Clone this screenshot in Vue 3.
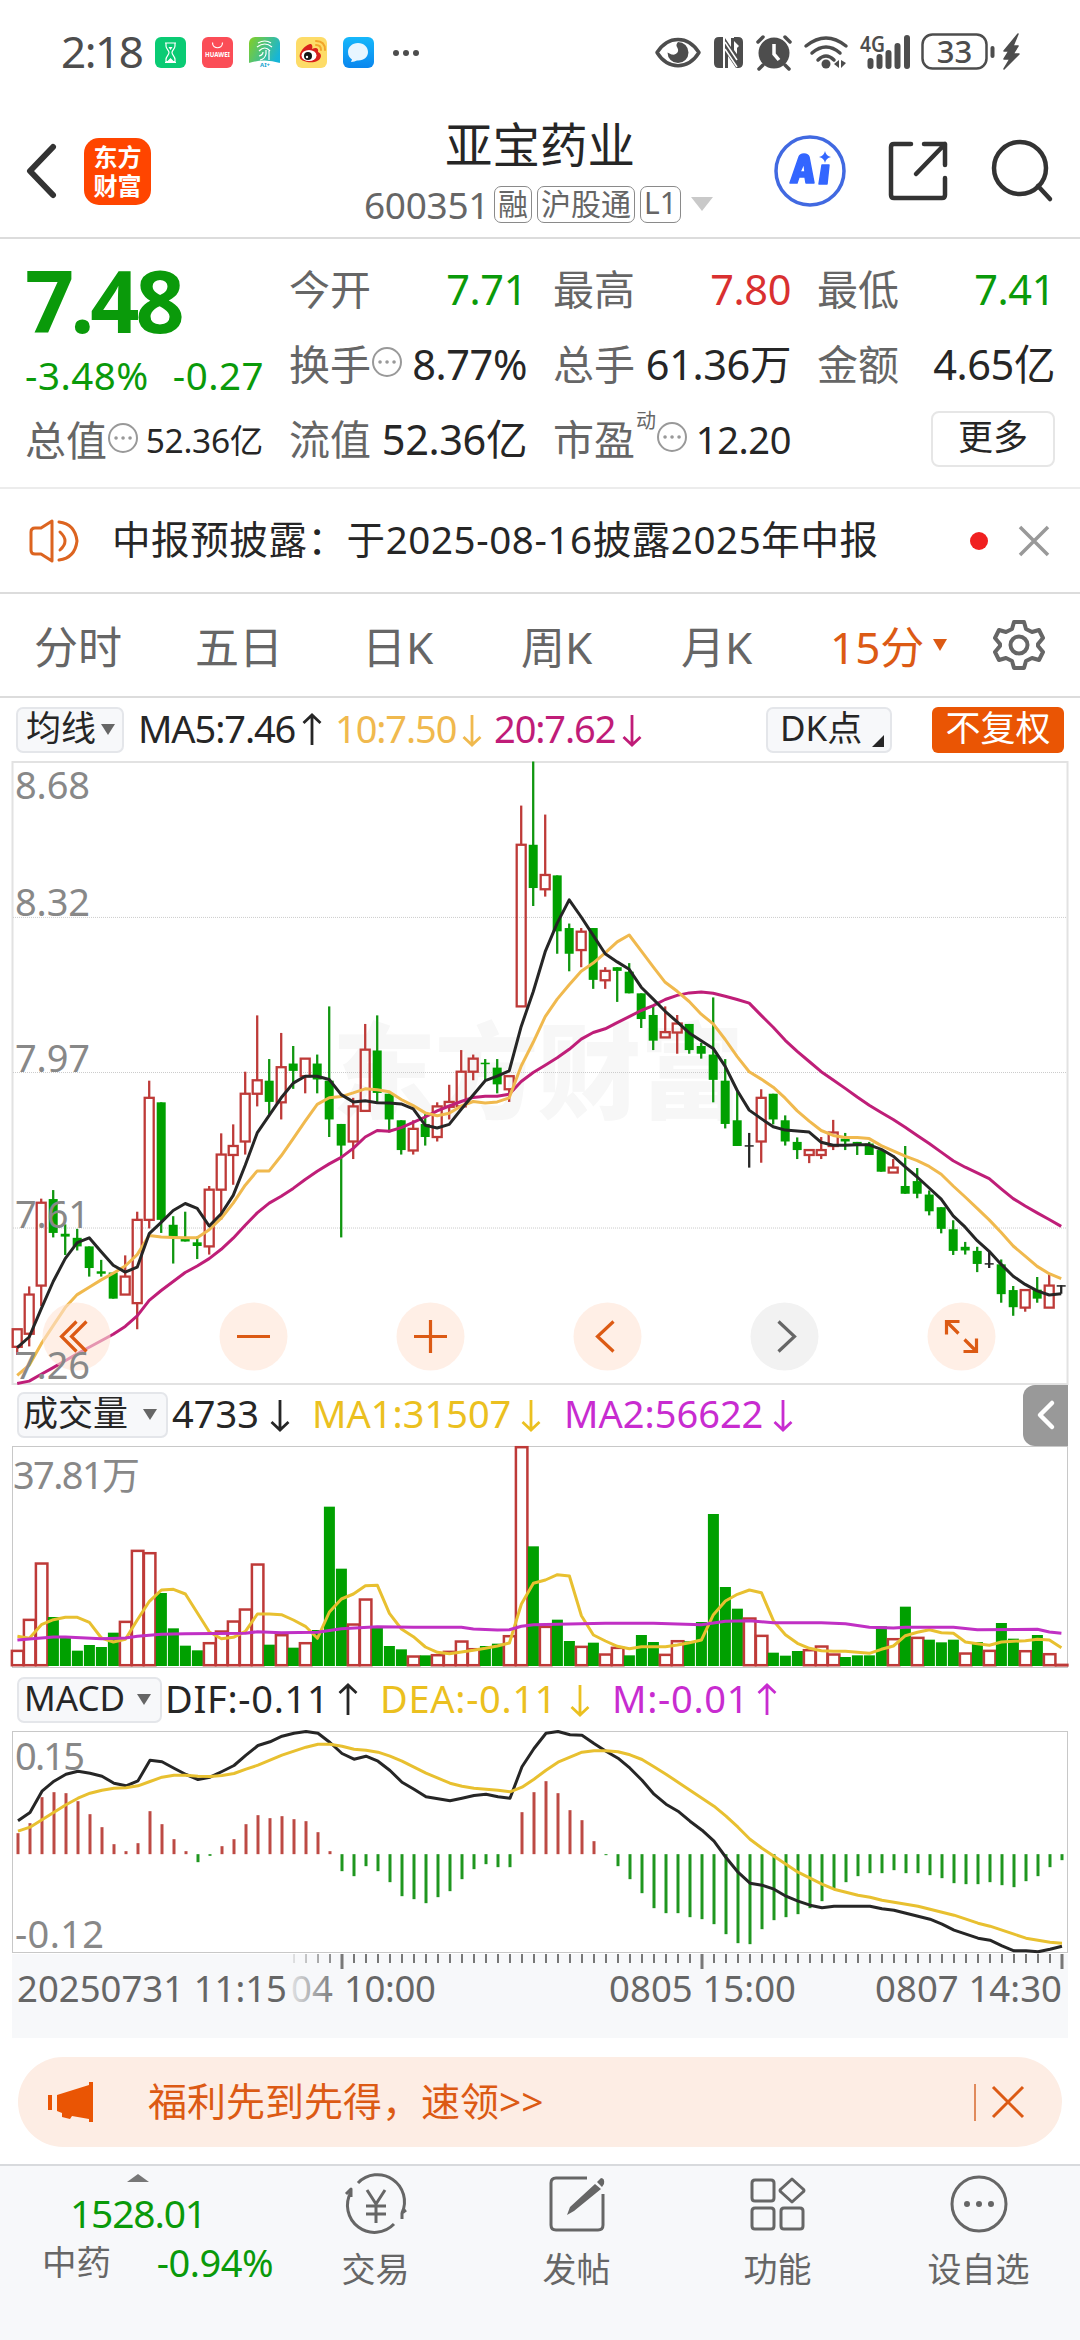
<template>
  <div class="page">
    <div class="status-bar">
      <span class="clock">2:18</span>
      <div class="app-icons">
        <svg viewBox="0 0 31 31" class="app-icon">
          <rect width="31" height="31" rx="6" fill="#0acb74" />
          <path d="M10 6h11M11 6v3c0 3 3 4 3 6.500s-3 4-3 7v2h9v-2c0-3-3-4.500-3-7s3-3.500 3-6.500v-3M10 25.500h11" class="line-white" />
          <path d="M13.500 10h4l-2 3zM12.500 24l3-3 3 3z" fill="#fff" />
        </svg>
        <svg viewBox="0 0 31 31" class="app-icon">
          <rect width="31" height="31" rx="6" fill="#fb4d57" />
          <path d="M10.500 5.500c0 7 10 7 10 0" class="line-white" />
          <text x="15.500" y="20" class="huawei" textLength="25" lengthAdjust="spacingAndGlyphs">HUAWEI</text>
        </svg>
        <svg viewBox="0 0 31 31" class="app-icon">
          <defs>
            <linearGradient id="assist" x1="0" y1="0" x2="1" y2="0.500">
              <stop offset="0%" stop-color="#85cf22" />
              <stop offset="100%" stop-color="#16b5d8" />
            </linearGradient>
          </defs>
          <rect width="31" height="31" rx="6" fill="url(#assist)" />
          <path d="M0 26q15.500-5 31 0v5h-31z" fill="#fff" />
          <path d="M9 6q7-4 13 0M8 10q8-6 15 0M10 14q6-6 11 0M20 14v9M17 13v4q-1 5-6 6M14 15q0 3-4 4" class="line-white" />
          <text x="16" y="30" class="ai-plus">AI+</text>
        </svg>
        <svg viewBox="0 0 31 31" class="app-icon">
          <rect width="31" height="31" rx="6" fill="#fddc68" />
          <path d="M14 7c-5 1-12 9-10 14 2 5 20 7 21-2 0-3-3-4-3-4 1-4-2-5-6-3 1-3 0-5-2-5z" fill="#d8201c" />
          <ellipse cx="13" cy="18.500" rx="7.500" ry="5.500" fill="#fff" />
          <circle cx="12" cy="19" r="4" fill="#151515" />
          <circle cx="11" cy="20" r="1.200" fill="#fff" />
          <path d="M20 8q5 0 5 5M20 4q9 0 9 9" fill="none" stroke="#f2a52b" stroke-width="2" stroke-linecap="round" />
        </svg>
        <svg viewBox="0 0 31 31" class="app-icon">
          <defs>
            <linearGradient id="chat" x1="0" y1="0" x2="0" y2="1">
              <stop offset="0%" stop-color="#16b8fb" />
              <stop offset="100%" stop-color="#0a86ee" />
            </linearGradient>
          </defs>
          <rect width="31" height="31" rx="6" fill="url(#chat)" />
          <path d="M15 6c-6 0-10 4-10 9 0 4 2 6 4 7.500l-1 2.500c3 0 4-1 6-1.500 7 .500 11-3.500 11-8.500s-4-9-10-9z" fill="#e8f6ff" />
        </svg>
      </div>
      <svg viewBox="0 0 28 8" class="more-dots">
        <circle v-for="x in [4, 14, 24]" :key="x" :cx="x" cy="4" r="3" fill="#4d4d4d" />
      </svg>
      <svg viewBox="0 0 366 40" class="system-icons">
        <path d="M2 20.500C13 3 33 3 44 20.500 33 38 13 38 2 20.500z" fill="none" stroke="#4d4d4d" stroke-width="3.500" stroke-linejoin="round" />
        <path d="M23 10a10.500 10.500 0 1 1-10.500 10.500l4 2c5 1 8-3 6-6.500-.8-2-2-3 .5-6z" fill="#4d4d4d" />
        <path d="M64 5h4v31h-4q-5 0-5-5v-21q0-5 5-5zM79 5h4q5 0 5 5v21q0 5-5 5h-1v-20l2-2-5-5z" fill="#4d4d4d" />
        <path d="M70 6l6 9v-9h3v12l5 7v11h-3l-8-12v12h-3z" fill="#4d4d4d" />
        <path d="M70 10l12 18M70 17l12 18" stroke="#fff" stroke-width="1.500" />
        <circle cx="119" cy="21" r="15.500" fill="#4d4d4d" />
        <path d="M119 12v10l5 6" fill="none" stroke="#fff" stroke-width="3.500" />
        <path d="M103 10l5-5M135 10l-5-5M108 33l-4 4M130 33l4 4" stroke="#4d4d4d" stroke-width="3.500" stroke-linecap="round" />
        <path d="M151 14q20-16 40 0M157 21q14-12 28 0M163 28q8-8 16 0" fill="none" stroke="#4d4d4d" stroke-width="3.500" stroke-linecap="round" />
        <circle cx="171" cy="32" r="4.500" fill="#4d4d4d" />
        <path d="M184 28v8l-5-4zM186 28v8l5-5z" fill="#4d4d4d" />
        <text x="205" y="20" class="net-type" textLength="25" lengthAdjust="spacingAndGlyphs">4G</text>
        <path d="M215.500 29v5M224.500 25v9M233.500 21v13M242.500 14v20M252 6v28" stroke="#4d4d4d" stroke-width="6" stroke-linecap="round" />
        <rect x="267.500" y="2.500" width="64" height="34" rx="10" fill="none" stroke="#4d4d4d" stroke-width="2.500" />
        <text x="299.500" y="30.500" class="battery">33</text>
        <path d="M337.500 16v8" stroke="#4d4d4d" stroke-width="4" stroke-linecap="round" />
        <path d="M363 2l-14 17h5l-5 8h6l-6 10 15-15h-6l5-8h-5z" fill="#4d4d4d" stroke="#4d4d4d" stroke-width="1.500" stroke-linejoin="round" />
      </svg>
    </div>

    <header class="header">
      <svg viewBox="0 0 32 56" class="back"><path d="M27 4L4 28l23 24" /></svg>
      <div class="brand"><span>东方</span><span>财富</span></div>
      <div class="title">
        <h1>亚宝药业</h1>
        <div class="code-row">
          <span class="code">600351</span>
          <span class="tag">融</span>
          <span class="tag">沪股通</span>
          <span class="tag tag-level">L1</span>
          <svg viewBox="0 0 22 14" class="caret"><path d="M0 0h22l-11 14z" fill="#c9c9c9" /></svg>
        </div>
      </div>
      <svg viewBox="0 0 72 72" class="ai">
        <circle cx="36" cy="36" r="34" fill="none" stroke="#4169e1" stroke-width="3.500" />
        <path d="M16 48l9-26q1-3 5-3 4 0 5 3l5 26h-8l-1-6h-6l-2 6zM26 37h5l-1-9zM48 30h7l-2 19h-8z" fill="#3366ff" fill-rule="evenodd" stroke="#3366ff" stroke-width="1.500" stroke-linejoin="round" />
        <path d="M51 16q1 5 6 6-5 1-6 6-1-5-6-6 5-1 6-6z" fill="#3366ff" />
      </svg>
      <svg viewBox="0 0 60 60" class="share">
        <path d="M23 3H6q-3 0-3 3v48q0 3 3 3h48q3 0 3-3V37M36 3h21v21M57 3L28 33" />
      </svg>
      <svg viewBox="0 0 62 62" class="search">
        <circle cx="29" cy="28" r="26" /><path d="M47 46l12 13" />
      </svg>
    </header>

    <section class="quote">
      <div class="quote-main">
        <div class="price down">7.48</div>
        <div class="change down"><span>-3.48%</span><span>-0.27</span></div>
        <div class="stat">
          <label>总值</label>
          <svg viewBox="0 0 32 32" class="info"><circle cx="16" cy="16" r="14" /><path d="M9 16h.1M16 16h.1M23 16h.1" /></svg>
          <b class="small">52.36亿</b>
        </div>
      </div>
      <div class="quote-grid">
        <div v-for="s in stats" :key="s.label" class="stat">
          <label>{{ s.label }}</label>
          <sup v-if="s.sup">{{ s.sup }}</sup>
          <svg v-if="s.info" viewBox="0 0 32 32" class="info"><circle cx="16" cy="16" r="14" /><path d="M9 16h.1M16 16h.1M23 16h.1" /></svg>
          <b :class="s.cls">{{ s.value }}</b>
        </div>
        <div class="stat"><button class="more-btn">更多</button></div>
      </div>
    </section>

    <section class="notice">
      <svg viewBox="0 0 52 44" class="horn">
        <path d="M2 13q0-4 4-4h6l11-7v40l-11-7H6q-4 0-4-4zM31 13q10 9 0 18M30 3q16 2 18 19-2 17-18 19" />
      </svg>
      <span class="notice-text">中报预披露：于2025-08-16披露2025年中报</span>
      <i class="red-dot"></i>
      <svg viewBox="0 0 32 32" class="close"><path d="M2 2l28 28M30 2L2 30" /></svg>
    </section>

    <nav class="tabs">
      <span v-for="t in tabs" :key="t">{{ t }}</span>
      <span class="active">15分<svg viewBox="0 0 14 12"><path d="M0 0h14l-7 12z" fill="#dc5a14" /></svg></span>
      <svg viewBox="0 0 52 52" class="gear">
        <path d="M21 3h10l2 7 6 3 7-2 4 8-5 6v2l5 6-4 8-7-2-6 3-2 7H21l-2-7-6-3-7 2-4-8 5-6v-2l-5-6 4-8 7 2 6-3z" />
        <circle cx="26" cy="26" r="8.500" />
      </svg>
    </nav>

    <div class="legend price-legend">
      <span class="select">均线<svg viewBox="0 0 14 11"><path d="M0 0h14l-7 11z" /></svg></span>
      <template v-for="m in priceLegend" :key="m.text">
        <span :class="m.cls">{{ m.text }}</span>
        <svg viewBox="0 0 20 34" :class="['arrow', m.cls, m.dir]"><path d="M10 2v30M1.500 24l8.500 8 8.500-8" /></svg>
      </template>
      <span class="select dk">DK点<svg viewBox="0 0 12 12"><path d="M12 0v12H0z" /></svg></span>
      <span class="adjust">不复权</span>
    </div>

    <div class="price-chart">
      <svg width="1080" height="624" viewBox="0 0 1080 624">
        <text x="332" y="350" class="watermark" textLength="412">东方财富</text>
        <rect x="12.500" y="1" width="1055" height="622" class="frame" />
        <line v-for="v in [408, 788, 1169]" :key="v" x1="13" x2="1067" :y1="py(v)" :y2="py(v)" class="grid-line" />

        <g v-for="(c, i) in candles" :key="i" :class="c[0]">
          <line :x1="cx(i)" :x2="cx(i)" :y1="py(c[1])" :y2="py(c[0] === 'r' ? c[2] : c[4])" />
          <line v-if="c[0] === 'r'" :x1="cx(i)" :x2="cx(i)" :y1="py(c[3])" :y2="py(c[4])" />
          <rect
            :x="cx(i) - 4.500"
            :y="py(c[2])"
            width="9"
            :height="Math.max(py(c[3]) - py(c[2]), 1.500)"
          />
        </g>

        <polyline :points="line(ma20, cx, py)" class="ma magenta" />
        <polyline :points="line(ma10, cx, py)" class="ma amber" />
        <polyline :points="line(ma5, cx, py)" class="ma black" />

        <g v-for="(b, i) in controls" :key="b.d" :transform="`translate(${76.500 + i * 177} 575.500)`" class="control" :class="{ grey: b.grey }">
          <circle r="34" />
          <path :d="b.d" />
        </g>

        <text v-for="l in priceLabels" :key="l.t" x="15" :y="l.y" class="axis-label" textLength="75">{{ l.t }}</text>
      </svg>
    </div>

    <div class="legend volume-legend">
      <span class="select">成交量<svg viewBox="0 0 14 11"><path d="M0 0h14l-7 11z" /></svg></span>
      <template v-for="m in volumeLegend" :key="m.text">
        <span :class="m.cls">{{ m.text }}</span>
        <svg viewBox="0 0 20 34" :class="['arrow', m.cls, m.dir]"><path d="M10 2v30M1.500 24l8.500 8 8.500-8" /></svg>
      </template>
      <span class="drawer"><svg viewBox="0 0 18 30"><path d="M15 3L3 15l12 12" /></svg></span>
    </div>

    <div class="volume-chart">
      <svg width="1080" height="224" viewBox="0 0 1080 224">
        <rect x="12.500" y="0.500" width="1055" height="221" class="frame dark" />
        <template v-for="(v, i) in volumes" :key="i">
          <rect v-if="v[0] === 'g'" :x="vx(i) - 5.500" :y="vy(v[1])" width="11" :height="vy(889) - vy(v[1])" fill="#00a000" />
          <rect v-else :x="vx(i) - 5.500" :y="vy(v[1]) + 1.200" width="11.500" :height="Math.max(vy(886) - vy(v[1]) - 1, 0.500)" class="vol-up" />
        </template>
        <polyline :points="line(volMa1, vx, vy)" class="ma gold" />
        <polyline :points="sparse(volMa2)" class="ma purple" />
        <text x="13" y="43" class="axis-label" textLength="127">37.81万</text>
      </svg>
    </div>

    <div class="legend macd-legend">
      <span class="select">MACD<svg viewBox="0 0 14 11"><path d="M0 0h14l-7 11z" /></svg></span>
      <template v-for="m in macdLegend" :key="m.text">
        <span :class="m.cls">{{ m.text }}</span>
        <svg viewBox="0 0 20 34" :class="['arrow', m.cls, m.dir]"><path d="M10 2v30M1.500 24l8.500 8 8.500-8" /></svg>
      </template>
    </div>

    <div class="macd-chart">
      <svg width="1080" height="222" viewBox="0 0 1080 222">
        <rect x="12.500" y="0.500" width="1055" height="221" class="frame dark" />
        <line
          v-for="(v, i) in macd"
          :key="i"
          :x1="mx(i)"
          :x2="mx(i)"
          :y1="my(552)"
          :y2="my(v)"
          stroke-width="3"
          :stroke="v < 552 ? '#bd4a44' : '#1f961f'"
        />
        <polyline :points="line(dif, mx, my)" class="ma black" />
        <polyline :points="line(dea, mx, my)" class="ma gold" />
        <text x="15" y="39" class="axis-label" textLength="70">0.15</text>
        <text x="15" y="217" class="axis-label" textLength="89">-0.12</text>
      </svg>
    </div>

    <div class="time-axis">
      <svg width="1056" height="84" viewBox="12 0 1056 84">
        <defs>
          <linearGradient id="fade" x1="0" y1="0" x2="1" y2="0">
            <stop offset="0%" stop-color="#f7f8fa" stop-opacity="0.900" />
            <stop offset="100%" stop-color="#f7f8fa" stop-opacity="0" />
          </linearGradient>
        </defs>
        <line
          v-for="i in ticks"
          :key="i"
          :x1="mx(i)"
          :x2="mx(i)"
          y1="0"
          :y2="i % 30 === 27 ? 15 : 9"
          stroke="#777"
          :stroke-width="i % 30 === 27 ? 3 : 2"
        />
        <text x="17" y="48" class="time" textLength="270">20250731 11:15</text>
        <text x="291" y="48" class="time" textLength="42">04</text>
        <text x="344" y="48" class="time" textLength="92">10:00</text>
        <rect x="288" y="0" width="54" height="84" fill="url(#fade)" />
        <text x="609" y="48" class="time" textLength="187">0805 15:00</text>
        <text x="875" y="48" class="time" textLength="187">0807 14:30</text>
      </svg>
    </div>

    <div class="banner">
      <svg viewBox="0 0 46 40" class="megaphone">
        <path d="M0 13h4v15H0zM9 13L41 3V0h4v40h-4v-3l-17-3-2 3-8-2v-4l-5-2z" fill="#ea5504" />
      </svg>
      <span class="banner-text">福利先到先得，速领&gt;&gt;</span>
      <i class="bar"></i>
      <svg viewBox="0 0 34 34" class="banner-close"><path d="M2 2l30 30M32 2L2 32" /></svg>
    </div>

    <footer class="bottom">
      <div class="sector">
        <svg viewBox="0 0 22 8"><path d="M11 0l11 8H0z" fill="#777" /></svg>
        <div class="sector-index">1528.01</div>
        <div class="sector-row"><span>中药</span><span class="down">-0.94%</span></div>
      </div>
      <div v-for="n in navs" :key="n.label" class="nav-item">
        <svg viewBox="0 0 64 60"><path :d="n.d" /><path v-if="n.fill" :d="n.fill" class="solid" /></svg>
        <span>{{ n.label }}</span>
      </div>
    </footer>
  </div>
</template>

<script setup>
const stats = [
  { label: '今开', value: '7.71', cls: 'down' },
  { label: '最高', value: '7.80', cls: 'up' },
  { label: '最低', value: '7.41', cls: 'down' },
  { label: '换手', value: '8.77%', info: true },
  { label: '总手', value: '61.36万' },
  { label: '金额', value: '4.65亿' },
  { label: '流值', value: '52.36亿' },
  { label: '市盈', value: '12.20', sup: '动', info: true, cls: 'mid' }
]

const tabs = ['分时', '五日', '日K', '周K', '月K']

const priceLegend = [
  { text: 'MA5:7.46', dir: 'rise', cls: 'c-black' },
  { text: '10:7.50', dir: 'fall', cls: 'c-amber' },
  { text: '20:7.62', dir: 'fall', cls: 'c-magenta' }
]
const volumeLegend = [
  { text: '4733', dir: 'fall', cls: 'c-black' },
  { text: 'MA1:31507', dir: 'fall', cls: 'c-gold' },
  { text: 'MA2:56622', dir: 'fall', cls: 'c-purple' }
]
const macdLegend = [
  { text: 'DIF:-0.11', dir: 'rise', cls: 'c-black' },
  { text: 'DEA:-0.11', dir: 'fall', cls: 'c-gold' },
  { text: 'M:-0.01', dir: 'rise', cls: 'c-purple' }
]

const priceLabels = [
  { t: '8.68', y: 38 },
  { t: '8.32', y: 155 },
  { t: '7.97', y: 311 },
  { t: '7.61', y: 467 },
  { t: '7.26', y: 618 }
]

const controls = [
  { d: 'M0-15L-15 0 0 15M10-15L-5 0 10 15' },
  { d: 'M-16.500 0h33' },
  { d: 'M-16.500 0h33M0-16.500v33' },
  { d: 'M6-15L-10 0 6 15' },
  { d: 'M-6-15L10 0-6 15', grey: true },
  { d: 'M-15-2v-13h13M-14-14L-3-3M2 15h13V2M14 14L3 3' }
]

const navs = [
  {
    label: '交易',
    d: 'M14 9a27 27 0 0 1 44 30M58 45l0-6 4-3M50 50a27 27 0 0 1-43-32M2 20l5-5v8M23 16l9 14 9-14M22 32h20M22 40h20M32 30v19'
  },
  {
    label: '发帖',
    d: 'M42 4H11q-5 0-5 5v42q0 5 5 5h42q5 0 5-5V20',
    fill: 'M50 10l6 5-27 22-7 4 3-8zM52 8l4-4q4 0 3 6l-2 3z'
  },
  {
    label: '功能',
    d: 'M9 6h16q3 0 3 3v15q0 3-3 3H9q-3 0-3-3V9q0-3 3-3zM46 5l11 10q2 1.500 0 3L46 28 35 18q-2-1.500 0-3zM9 34h16q3 0 3 3v15q0 3-3 3H9q-3 0-3-3V37q0-3 3-3zM38 34h16q3 0 3 3v15q0 3-3 3H38q-3 0-3-3V37q0-3 3-3z'
  },
  {
    label: '设自选',
    d: 'M5 30a27 27 0 1 0 54 0a27 27 0 1 0-54 0',
    fill: 'M17 30a3 3 0 1 0 6 0a3 3 0 1 0-6 0M29 30a3 3 0 1 0 6 0a3 3 0 1 0-6 0M41 30a3 3 0 1 0 6 0a3 3 0 1 0-6 0'
  }
]

// [direction, high, body top, body bottom, low], levels run from 26 (8.68) to 1549 (7.26)
const candles = [
  ['r', 1417, 1417, 1460, 1480], ['r', 1312, 1332, 1428, 1459], ['r', 1097, 1107, 1310, 1360], ['g', 1076, 1098, 1181, 1192],
  ['g', 1160, 1183, 1190, 1235], ['g', 1171, 1193, 1214, 1224], ['g', 1214, 1214, 1267, 1288], ['g', 1247, 1275, 1281, 1288],
  ['g', 1278, 1278, 1342, 1342], ['r', 1236, 1288, 1332, 1332], ['r', 1129, 1149, 1353, 1417], ['r', 808, 850, 1149, 1170],
  ['g', 861, 861, 1149, 1181], ['g', 1140, 1161, 1192, 1256], ['g', 1129, 1194, 1202, 1202], ['g', 1190, 1204, 1213, 1245],
  ['r', 1066, 1075, 1214, 1234], ['r', 937, 989, 1075, 1148], ['r', 915, 968, 990, 1063], ['r', 786, 840, 957, 989],
  ['r', 648, 807, 840, 871], ['g', 755, 808, 860, 890], ['r', 691, 775, 861, 903], ['g', 723, 766, 784, 828],
  ['r', 754, 754, 797, 839], ['g', 744, 766, 805, 839], ['g', 626, 808, 903, 946], ['g', 914, 914, 967, 1192],
  ['r', 850, 871, 957, 1000], ['r', 669, 732, 882, 882], ['g', 648, 734, 838, 860], ['g', 840, 840, 903, 935],
  ['g', 905, 905, 978, 989], ['r', 905, 926, 979, 989], ['g', 890, 914, 946, 967], ['r', 861, 871, 946, 957],
  ['r', 818, 860, 872, 903], ['r', 733, 786, 871, 871], ['r', 744, 754, 786, 807], ['g', 755, 764, 767, 808],
  ['g', 755, 776, 817, 839], ['r', 797, 797, 829, 860], ['r', 134, 230, 626, 626], ['g', 26, 230, 336, 380],
  ['r', 156, 304, 339, 357], ['g', 305, 305, 442, 497], ['g', 423, 434, 497, 540], ['r', 434, 443, 488, 530],
  ['g', 434, 434, 561, 583], ['r', 530, 539, 562, 583], ['g', 530, 530, 539, 615], ['g', 520, 541, 594, 594],
  ['g', 594, 594, 657, 679], ['g', 625, 647, 710, 733], ['r', 626, 689, 702, 702], ['r', 647, 668, 690, 742],
  ['g', 669, 669, 733, 742], ['g', 715, 723, 742, 754], ['g', 604, 744, 806, 861], ['g', 755, 808, 914, 925],
  ['g', 830, 905, 968, 968], ['k', 936, 966, 969, 1021], ['r', 829, 850, 957, 1009], ['g', 840, 840, 903, 915],
  ['g', 893, 905, 957, 967], ['g', 947, 958, 978, 1000], ['r', 978, 978, 990, 1010], ['r', 946, 978, 990, 1000],
  ['r', 904, 935, 968, 978], ['g', 936, 950, 957, 978], ['g', 958, 958, 963, 990], ['g', 958, 962, 990, 990],
  ['g', 978, 978, 1031, 1031], ['r', 1000, 1021, 1033, 1033], ['g', 968, 1066, 1085, 1085], ['g', 1022, 1054, 1085, 1096],
  ['g', 1077, 1087, 1128, 1138], ['g', 1118, 1118, 1171, 1182], ['g', 1150, 1172, 1225, 1235], ['g', 1203, 1215, 1224, 1234],
  ['g', 1215, 1225, 1257, 1277], ['k', 1225, 1255, 1258, 1267], ['g', 1246, 1258, 1331, 1352], ['g', 1311, 1321, 1363, 1384],
  ['r', 1321, 1321, 1364, 1374], ['g', 1289, 1320, 1342, 1352], ['r', 1280, 1310, 1364, 1364], ['k', 1309, 1309, 1311, 1330]
]

const ma5 = [
  1462, 1436, 1367, 1300, 1244, 1205, 1193, 1227, 1260, 1277, 1265, 1183, 1155, 1126, 1109, 1121, 1164, 1134, 1089, 1015, 936, 893,
  850, 814, 797, 797, 805, 842, 860, 857, 862, 863, 865, 877, 917, 924, 915, 878, 843, 808, 797, 784, 675, 590, 492, 422, 365, 407,
  452, 497, 517, 535, 579, 608, 638, 664, 691, 710, 729, 773, 832, 880, 901, 921, 929, 931, 934, 959, 966, 966, 965, 965, 976, 993,
  1019, 1044, 1071, 1098, 1139, 1167, 1200, 1226, 1258, 1287, 1307, 1323, 1333, 1330
]
const ma10 = [
  1530, 1505, 1453, 1408, 1364, 1332, 1314, 1296, 1280, 1262, 1234, 1187, 1191, 1192, 1193, 1193, 1173, 1145, 1108, 1064, 1029, 1029,
  992, 950, 907, 866, 850, 847, 838, 828, 830, 835, 854, 869, 887, 894, 888, 870, 859, 863, 860, 850, 772, 714, 651, 608, 573, 540,
  520, 495, 468, 451, 490, 529, 567, 589, 614, 645, 669, 707, 749, 786, 804, 824, 851, 882, 907, 930, 942, 947, 947, 950, 967, 980,
  993, 1004, 1018, 1037, 1066, 1093, 1121, 1149, 1180, 1213, 1238, 1263, 1281, 1293
]
const ma20 = [
  1550, 1544, 1527, 1511, 1494, 1477, 1461, 1445, 1429, 1410, 1384, 1346, 1322, 1300, 1278, 1262, 1244, 1221, 1194, 1162, 1132, 1108,
  1091, 1072, 1050, 1030, 1012, 996, 974, 946, 930, 932, 923, 910, 897, 882, 870, 859, 849, 846, 846, 841, 810, 788, 770, 752, 731,
  706, 690, 681, 666, 651, 636, 624, 609, 599, 593, 591, 594, 601, 609, 618, 648, 677, 709, 736, 761, 786, 806, 827, 848, 868, 886,
  903, 922, 942, 962, 983, 1004, 1020, 1034, 1048, 1073, 1097, 1115, 1132, 1148, 1165
]

const volumes = (
  'r840 r747 r578 g742 g805 g843 g826 g832 g789 r753 r540 r547 g670 g776 g828 g842 r817 r782 r752 r716 r581 g825 ' +
  'r793 g834 r817 g781 g411 g597 r761 r686 g773 g829 g839 r857 g857 r853 r843 r812 r835 g829 g822 r796 r229 g530 ' +
  'r768 g750 g814 r828 g819 r851 r831 g857 g796 g817 r852 r811 g815 g757 g433 g652 g717 r743 r795 g849 g858 g844 ' +
  'r838 r827 r851 g862 g857 g857 g770 r805 g711 r801 g810 g818 g810 r848 g817 r840 g760 g807 r841 g796 r850 r882'
).split(' ').map(s => [s[0], Number(s.slice(1))])

const volMa1 = [
  800, 806, 765, 750, 743, 743, 758, 805, 817, 809, 750, 695, 661, 659, 673, 730, 787, 807, 803, 785, 733, 733, 735, 751, 770, 806,
  727, 688, 673, 648, 647, 731, 778, 801, 832, 848, 852, 847, 842, 836, 829, 820, 703, 641, 631, 615, 619, 738, 796, 814, 830, 837,
  831, 831, 831, 826, 819, 811, 735, 694, 674, 661, 669, 753, 795, 821, 836, 843, 845, 845, 848, 851, 839, 829, 798, 788, 780, 789,
  791, 817, 822, 827, 817, 815, 813, 809, 811, 834
]
const volMa2 = [
  [0, 811], [1, 808], [3, 802], [4, 802], [7, 807], [9, 805], [10, 800], [12, 794], [14, 792], [19, 791], [20, 786], [22, 789],
  [25, 788], [27, 777], [30, 771], [33, 773], [37, 773], [38, 778], [40, 781], [41, 780], [42, 770], [43, 765], [49, 761], [53, 761],
  [57, 765], [59, 755], [61, 753], [63, 759], [67, 759], [69, 762], [71, 773], [73, 775], [74, 773], [78, 773], [80, 780], [85, 779],
  [86, 787], [87, 791]
]

const macd = [
  489, 459, 381, 366, 369, 393, 432, 471, 522, 543, 519, 423, 462, 507, 543, 576, 557, 528, 507, 462, 435, 444, 438, 447, 453, 486,
  543, 603, 618, 588, 603, 636, 678, 687, 699, 681, 663, 627, 597, 582, 591, 591, 426, 366, 333, 369, 420, 450, 513, 555, 588, 627,
  669, 714, 729, 729, 741, 747, 762, 792, 819, 822, 777, 750, 741, 732, 714, 693, 658, 636, 618, 609, 609, 600, 609, 609, 615, 624,
  639, 642, 642, 636, 645, 651, 633, 618, 591, 570
]
const dif = [
  452, 427, 363, 333, 312, 303, 309, 318, 339, 347, 332, 270, 275, 294, 313, 328, 321, 304, 286, 255, 226, 215, 198, 189, 184, 189,
  217, 250, 267, 258, 273, 301, 336, 357, 380, 386, 392, 384, 376, 372, 380, 384, 290, 235, 189, 184, 194, 195, 220, 243, 264, 294,
  330, 372, 402, 423, 453, 480, 513, 562, 606, 639, 645, 657, 678, 693, 705, 713, 708, 708, 708, 708, 716, 720, 729, 738, 747, 762,
  780, 792, 804, 810, 827, 842, 842, 845, 837, 828
]
const dea = [
  483, 471, 449, 426, 404, 384, 369, 360, 354, 353, 347, 334, 321, 315, 315, 318, 319, 316, 310, 297, 285, 270, 255, 243, 231, 222,
  222, 228, 237, 240, 246, 258, 273, 291, 309, 324, 339, 348, 354, 357, 360, 365, 351, 327, 300, 276, 261, 246, 242, 242, 245, 254,
  268, 290, 312, 336, 360, 384, 408, 438, 471, 507, 534, 558, 582, 606, 624, 642, 657, 666, 675, 681, 690, 696, 702, 708, 717, 726,
  735, 747, 759, 768, 780, 792, 804, 810, 816, 819
]

const ticks = Array.from({ length: 65 }, (_, i) => i + 23)

const cx = i => 17.2 + i * 12
const vx = i => 17.4 + i * 12
const mx = i => 18 + i * 12
const py = v => (v - 26) / 2.45 + 0.5
const vy = v => (v - 229) / 3
const my = v => (v - 184) / 3 + 0.5

function line(values, fx, fy) {
  return values.map((v, i) => `${fx(i).toFixed(1)},${fy(v).toFixed(1)}`).join(' ')
}

function sparse(pairs) {
  return pairs.map(([i, v]) => `${vx(i)},${vy(v).toFixed(1)}`).join(' ')
}
</script>

<style>
body {
  margin: 0;
  background: #fff;
}
</style>

<style scoped>
.page {
  width: 1080px;
  height: 2340px;
  overflow: hidden;
  display: flex;
  flex-direction: column;
  background: #fff;
  color: #262626;
  font-family: "Noto Sans", "Noto Sans CJK SC", sans-serif;
}

.page > * {
  flex: none;
  box-sizing: border-box;
}

.page svg {
  display: block;
  flex: none;
  overflow: visible;
}

.down {
  color: #0a9a0a;
}

.up {
  color: #d93030;
}

/* status bar */
.status-bar {
  height: 105px;
  display: flex;
  align-items: center;
  padding: 0 0 0 61px;
}

.clock {
  width: 94px;
  margin-top: -3px;
  font-size: 44px;
  line-height: 60px;
  letter-spacing: -1.5px;
  color: #4d4d4d;
}

.app-icons {
  display: flex;
  gap: 16px;
}

.app-icon {
  width: 31px;
  height: 31px;
}

.line-white {
  fill: none;
  stroke: #fff;
  stroke-width: 1.2;
}

.huawei {
  fill: #fff;
  font: 700 6.5px "Noto Sans", sans-serif;
  text-anchor: middle;
}

.ai-plus {
  fill: #16a5d0;
  font: 700 6px "Noto Sans", sans-serif;
  text-anchor: middle;
}

.more-dots {
  width: 28px;
  height: 8px;
  margin-left: 18px;
}

.system-icons {
  width: 366px;
  height: 40px;
  margin: -2px 0 0 235px;
}

.net-type {
  fill: #4d4d4d;
  font: 600 21px "Noto Sans", sans-serif;
}

.battery {
  fill: #4d4d4d;
  font: 500 31px "Noto Sans", sans-serif;
  text-anchor: middle;
}

/* header */
.header {
  height: 134px;
  display: flex;
  align-items: flex-start;
  border-bottom: 2px solid #dcdcdc;
}

.back {
  width: 32px;
  height: 56px;
  margin: 38px 0 0 26px;
}

.back path {
  fill: none;
  stroke: #333;
  stroke-width: 6;
  stroke-linecap: round;
  stroke-linejoin: round;
}

.brand {
  width: 67px;
  height: 67px;
  margin: 33px 0 0 26px;
  border-radius: 15px;
  background: #ff4500;
  color: #fff;
  display: flex;
  flex-direction: column;
  justify-content: center;
  align-items: center;
  font-size: 24px;
  font-weight: 700;
  line-height: 29px;
}

.brand span {
  position: relative;
  top: -1px;
}

.title {
  flex: 1;
  margin: 9px 0 0;
  padding-left: 213px;
}

.title h1 {
  margin: 0 0 0 81px;
  font-size: 47.5px;
  font-weight: 400;
  line-height: 62px;
}

.code-row {
  display: flex;
  align-items: center;
  height: 48px;
  margin-top: 4px;
}

.code {
  width: 130px;
  font-size: 37px;
  letter-spacing: -0.3px;
  color: #666;
}

.tag {
  box-sizing: border-box;
  height: 37px;
  margin-right: 5px;
  padding: 0 3px;
  border: 1.5px solid #8a8a8a;
  border-radius: 7px;
  color: #666;
  font-size: 30px;
  line-height: 31px;
  font-family: "Noto Sans CJK SC", sans-serif;
}

.tag-level {
  font-family: "Noto Sans", sans-serif;
  padding: 0 3px;
  margin-right: 10px;
}

.caret {
  width: 22px;
  height: 14px;
}

.ai {
  width: 72px;
  height: 72px;
  margin: 30px 0 0 0;
}

.share {
  width: 60px;
  height: 60px;
  margin: 36px 0 0 42px;
}

.search {
  width: 62px;
  height: 62px;
  margin: 35px 27px 0 43px;
}

.share path,
.search circle,
.search path {
  fill: none;
  stroke: #333;
  stroke-width: 4.5;
  stroke-linecap: round;
  stroke-linejoin: round;
}

/* quote */
.quote {
  height: 250px;
  display: flex;
  gap: 26px;
  padding: 12px 24px 0 25px;
  border-bottom: 2px solid #ececec;
}

.quote-main {
  width: 238px;
}

.price {
  height: 98px;
  line-height: 98px;
  font-size: 86px;
  font-weight: 700;
  letter-spacing: -4px;
}

.change {
  height: 53px;
  line-height: 53px;
  display: flex;
  gap: 24px;
  font-size: 38.5px;
  letter-spacing: 0.5px;
}

.quote-grid {
  display: grid;
  grid-template-columns: repeat(3, 238px);
  column-gap: 26px;
  grid-auto-rows: 75px;
}

.stat {
  height: 75px;
  display: flex;
  align-items: center;
  white-space: nowrap;
}

.stat label {
  color: #666;
  font-size: 41px;
  line-height: 60px;
}

.stat b {
  margin-left: auto;
  font-weight: 400;
  font-size: 41.5px;
  letter-spacing: -0.4px;
  line-height: 60px;
}

.stat b.small {
  font-size: 33.5px;
  letter-spacing: -0.3px;
}

.stat b.mid {
  font-size: 38px;
}

.stat sup {
  margin: -36px 0 0 1px;
  font-size: 20px;
  line-height: 20px;
  color: #666;
}

.info {
  width: 32px;
  height: 32px;
  margin-top: -4px;
}

.info circle {
  fill: none;
  stroke: #999;
  stroke-width: 2;
}

.info path {
  stroke: #999;
  stroke-width: 3.5;
  stroke-linecap: round;
}

.more-btn {
  width: 124px;
  height: 56px;
  margin-left: auto;
  border: 2px solid #e6e6e6;
  border-radius: 8px;
  background: #fff;
  color: #262626;
  padding: 0 0 7px;
  font: 35px/44px "Noto Sans CJK SC", sans-serif;
}

/* notice */
.notice {
  height: 105px;
  display: flex;
  align-items: center;
  padding: 0 30px 0 29px;
  border-bottom: 2px solid #dcdcdc;
}

.horn {
  width: 52px;
  height: 44px;
}

.horn path {
  fill: none;
  stroke: #dc6420;
  stroke-width: 3;
  stroke-linejoin: round;
  stroke-linecap: round;
}

.notice-text {
  margin: -7px 0 0 31px;
  font-size: 38.5px;
  letter-spacing: 0.6px;
  white-space: nowrap;
}

.red-dot {
  width: 18px;
  height: 18px;
  margin-left: auto;
  border-radius: 50%;
  background: #f02020;
}

.close {
  width: 32px;
  height: 32px;
  margin-left: 30px;
}

.close path {
  stroke: #999;
  stroke-width: 3.5;
}

/* period tabs */
.tabs {
  height: 104px;
  display: flex;
  align-items: center;
  padding: 0 0 1px 34px;
  border-bottom: 2px solid #dcdcdc;
  font-size: 44px;
  color: #666;
}

.tabs > span:nth-child(1) { width: 161px; }
.tabs > span:nth-child(2) { width: 167px; }
.tabs > span:nth-child(3) { width: 159px; }
.tabs > span:nth-child(4) { width: 160px; }
.tabs > span:nth-child(5) { width: 149px; }

.tabs .active {
  width: 163px;
  color: #dc5a14;
  display: flex;
  align-items: center;
}

.active svg {
  width: 14px;
  height: 12px;
  margin-left: 9px;
}

.gear {
  width: 52px;
  height: 52px;
}

.gear path,
.gear circle {
  fill: none;
  stroke: #666;
  stroke-width: 4;
  stroke-linejoin: round;
}

/* legends */
.legend {
  display: grid;
  align-items: center;
  font-size: 38px;
  line-height: 46px;
  white-space: nowrap;
}

.legend > span:not(.select, .adjust, .drawer) {
  margin-top: -4px;
}

.price-legend {
  height: 63px;
  padding-left: 16px;
  grid-template-columns: 122px 164px 33px 127px 32px 128px 144px 166px 132px;
  letter-spacing: -1.1px;
}

.volume-legend {
  height: 62px;
  padding-left: 17px;
  grid-template-columns: 155px 98px 42px 209px 43px 209px 250px 45px;
}

.macd-legend {
  height: 63px;
  padding-left: 17px;
  grid-template-columns: 148px 173px 42px 190px 42px 145px 40px;
  letter-spacing: 0.7px;
}

.select {
  display: flex;
  align-items: center;
  justify-self: start;
  box-sizing: border-box;
  height: 46px;
  padding: 0 9px 4px 8px;
  border: 2px solid #e4e6ea;
  border-radius: 7px;
  background: #f7f8fa;
  font-size: 35px;
  letter-spacing: 0;
}

.select svg {
  width: 14px;
  height: 11px;
  margin-top: 3px;
  fill: #666;
}

.price-legend .select {
  width: 108px;
}

.price-legend .select svg {
  margin-left: 5px;
}

.volume-legend .select {
  width: 151px;
  padding-left: 4px;
}

.volume-legend .select svg {
  margin-left: 15px;
}

.macd-legend .select {
  width: 145px;
  padding-left: 5px;
}

.macd-legend .select svg {
  margin-left: auto;
}

.price-legend .dk {
  width: 126px;
  padding-left: 12px;
}

.price-legend .dk svg {
  width: 12px;
  height: 12px;
  margin: 27px 0 0 10px;
  fill: #262626;
}

.adjust {
  height: 46px;
  border-radius: 6px;
  background: #ea5504;
  color: #fff;
  font-size: 35px;
  line-height: 42px;
  text-align: center;
  letter-spacing: 0;
}

.arrow {
  width: 20px;
  height: 34px;
  stroke: currentColor;
  stroke-width: 2.8;
  fill: none;
}

.arrow.rise {
  transform: scaleY(-1);
}

.c-black { color: #262626; }
.c-amber { color: #f0b94e; }
.c-magenta { color: #c01c78; }
.c-gold { color: #ebc020; }
.c-purple { color: #c82cd0; }

.drawer {
  height: 61px;
  border-radius: 12px 0 0 12px;
  background: #999;
  display: flex;
  align-items: center;
  justify-content: center;
}

.drawer svg {
  width: 18px;
  height: 30px;
}

.drawer path {
  fill: none;
  stroke: #fff;
  stroke-width: 4.5;
  stroke-linecap: round;
  stroke-linejoin: round;
}

/* charts */
.price-chart {
  height: 623px;
}

.volume-chart {
  height: 222px;
}

.macd-chart {
  height: 222px;
}

.frame {
  fill: none;
  stroke: #e2e2e2;
  stroke-width: 2;
}

.frame.dark {
  stroke: #c8c8c8;
  stroke-width: 1;
}

.grid-line {
  stroke: #ccc;
  stroke-width: 1;
  stroke-dasharray: 1 1;
}

.watermark {
  fill: #f7f7f7;
  font: 900 104px "Noto Sans CJK SC", sans-serif;
}

.r line,
.r rect {
  stroke: #be3a38;
  stroke-width: 2.3;
  fill: none;
}

.g line {
  stroke: #109610;
  stroke-width: 2.3;
}

.g rect {
  fill: #00a000;
}

.k line {
  stroke: #262626;
  stroke-width: 2.3;
}

.k rect {
  fill: #262626;
}

.vol-up {
  fill: #fff;
  stroke: #be3a38;
  stroke-width: 2.5;
}

.ma {
  fill: none;
  stroke-width: 3;
  stroke-linejoin: round;
}

.black { stroke: #262626; }
.amber { stroke: #f0b94e; }
.magenta { stroke: #bf1e78; }
.gold { stroke: #e8c030; }
.purple { stroke: #c030c4; }

.axis-label {
  fill: #888;
  font: 38px "Noto Sans", "Noto Sans CJK SC", sans-serif;
}

.control circle {
  fill: #ffe4d6;
  fill-opacity: 0.6;
}

.control path {
  fill: none;
  stroke: #dc5a14;
  stroke-width: 3.2;
}

.control.grey circle {
  fill: #f2f2f2;
  fill-opacity: 1;
}

.control.grey path {
  stroke: #666;
}

.time-axis {
  width: 1056px;
  height: 84px;
  margin: 1px 0 0 12px;
  background: #f7f8fa;
}

.time {
  fill: #666;
  font: 36.5px "Noto Sans", sans-serif;
}

/* banner */
.banner {
  width: 1044px;
  height: 90px;
  margin: 19px 0 17px 18px;
  border-radius: 45px;
  background: #fdede4;
  display: flex;
  align-items: center;
  padding: 0 37px 0 30px;
}

.megaphone {
  width: 46px;
  height: 40px;
}

.banner-text {
  margin: -7px 0 0 54px;
  font-size: 39px;
  color: #dc5a14;
}

.bar {
  width: 2px;
  height: 37px;
  margin-left: auto;
  background: #e08a5c;
}

.banner-close {
  width: 34px;
  height: 34px;
  margin-left: 15px;
}

.banner-close path {
  stroke: #dc5a14;
  stroke-width: 3;
}

/* bottom bar */
.bottom {
  flex: 1;
  display: flex;
  border-top: 2px solid #d8dadd;
  background: #f7f8fa;
  font-size: 34px;
  line-height: 46px;
  color: #666;
}

.sector {
  width: 275px;
}

.sector svg {
  width: 22px;
  height: 8px;
  margin: 8px 0 0 127px;
}

.sector-index {
  margin: 8px 0 0 70px;
  color: #0a9a0a;
  font-size: 39px;
  letter-spacing: -1.2px;
}

.sector-row {
  display: flex;
  justify-content: space-between;
  margin-top: 3px;
  padding: 0 2px 0 42px;
  font-size: 34.5px;
}

.sector-row .down {
  font-size: 38px;
  letter-spacing: -0.5px;
}

.nav-item {
  width: 201px;
  display: flex;
  flex-direction: column;
  align-items: center;
}

.nav-item svg {
  width: 64px;
  height: 60px;
  margin: 8px 0 12px;
}

.nav-item path {
  fill: none;
  stroke: #666;
  stroke-width: 3;
  stroke-linejoin: round;
}

.nav-item .solid {
  fill: #666;
  stroke: none;
}
</style>
